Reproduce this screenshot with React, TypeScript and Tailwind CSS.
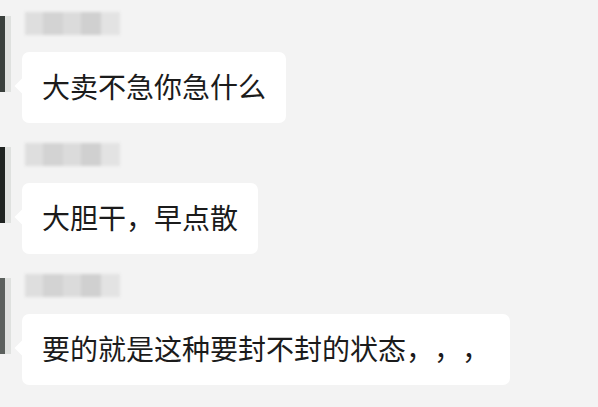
const messages = [
  { text: '大卖不急你急什么', avatar: 'bg-[#3a403d]' },
  { text: '大胆干，早点散', avatar: 'bg-[#1f2321]' },
  { text: '要的就是这种要封不封的状态，，，', avatar: 'bg-[#5b605d]' },
];

function BlurredName() {
  // names are pixelated in the original, so just gray blocks with a blur
  return (
    <div className="ml-[3px] flex h-[23px] w-[95px] blur-[1.5px]">
      <div className="w-[18px] bg-[#dedede]" />
      <div className="w-[20px] bg-[#d3d3d3]" />
      <div className="w-[18px] bg-[#dbdbdb]" />
      <div className="w-[20px] bg-[#d0d0d0]" />
      <div className="w-[19px] bg-[#e3e3e3]" />
    </div>
  );
}

export default function App() {
  return (
    <div
      className="w-[598px] h-[407px] overflow-hidden bg-[#f3f3f3] pt-[12px]"
      style={{ fontFamily: '"Noto Sans CJK SC", "Noto Sans", sans-serif' }}
    >
      {messages.map((m, i) => (
        <div key={i} className="flex gap-[11px] mb-[20px]">
          <div
            className={`-ml-[69px] mt-[4px] h-[76px] w-[80px] shrink-0 border-r-[6px] border-[#dfe1df] ${m.avatar}`}
          />
          <div className="flex flex-col items-start">
            <BlurredName />
            <div className="relative mt-[17px] flex h-[71px] items-center rounded-[7px] bg-white px-[20px] pb-[4px]">
              {/* little tail pointing at the avatar */}
              <div className="absolute -left-[5px] top-[28px] h-[12px] w-[12px] rotate-45 bg-white" />
              <span className="relative text-[28px] leading-none text-[#1b1b1b] whitespace-nowrap [text-spacing-trim:space-all]">
                {m.text}
              </span>
            </div>
          </div>
        </div>
      ))}
    </div>
  );
}
